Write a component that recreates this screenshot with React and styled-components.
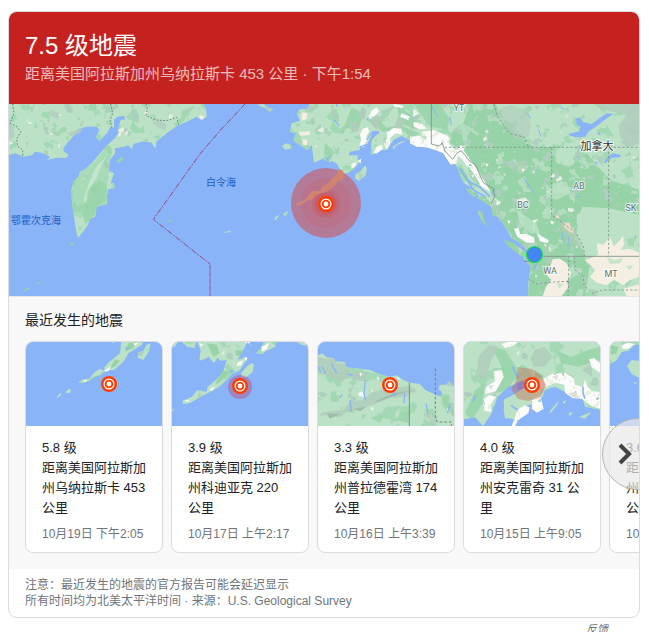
import styled, { createGlobalStyle } from 'styled-components'

const quakes = [
  {
    magnitude: '5.8 级',
    place: '距离美国阿拉斯加州乌纳拉斯卡 453 公里',
    time: '10月19日 下午2:05',
    map: 'aleutians',
  },
  {
    magnitude: '3.9 级',
    place: '距离美国阿拉斯加州科迪亚克 220 公里',
    time: '10月17日 上午2:17',
    map: 'kodiak',
  },
  {
    magnitude: '3.3 级',
    place: '距离美国阿拉斯加州普拉德霍湾 174 公里',
    time: '10月16日 上午3:39',
    map: 'prudhoe',
  },
  {
    magnitude: '4.0 级',
    place: '距离美国阿拉斯加州安克雷奇 31 公里',
    time: '10月15日 上午9:05',
    map: 'anchorage',
  },
  {
    magnitude: '3.6 级',
    place: '距离美国阿拉斯加州科迪亚克 196 公里',
    time: '10月14日 上午7:12',
    map: 'coast',
  },
]

const color = {
  water: '#8ab4f8',
  land: '#bbe2c6',
  forest: '#96d3a7',
  rock: '#b0cdbc',
  sand: '#f4efe2',
  snow: '#fbfbfb',
}

// Terrain blotches: every channel of the noise is cut into one kind of patch
const TerrainFilter = ({ id, freq, seed, green, rock, sand, tone }) => (
  <filter id={id} x="0" y="0" width="1" height="1" colorInterpolationFilters="sRGB">
    <feTurbulence type="fractalNoise" baseFrequency={freq} numOctaves="3" seed={seed} result="noise" />
    <feColorMatrix
      in="noise"
      values={`0 0 0 0 ${tone[0]}  0 0 0 0 ${tone[1]}  0 0 0 0 ${tone[2]}  20 0 0 0 ${green * -20}`}
      result="green"
    />
    <feColorMatrix
      in="noise"
      values={`0 0 0 0 .68  0 0 0 0 .81  0 0 0 0 .74  0 20 0 0 ${rock * -20}`}
      result="rock"
    />
    <feColorMatrix
      in="noise"
      values={`0 0 0 0 .9  0 0 0 0 .94  0 0 0 0 .88  0 0 20 0 ${sand * -20}`}
      result="sand"
    />
    <feMerge result="patches">
      <feMergeNode in="green" />
      <feMergeNode in="rock" />
      <feMergeNode in="sand" />
    </feMerge>
    <feComposite in="patches" in2="SourceAlpha" operator="in" result="cut" />
    <feMerge>
      <feMergeNode in="SourceGraphic" />
      <feMergeNode in="cut" />
    </feMerge>
  </filter>
)

const Epicenter = ({ x, y }) => (
  <g transform={`translate(${x} ${y})`}>
    <circle r="8" fill="#ff3d00" />
    <circle r="4.9" fill="none" stroke="#fff" strokeWidth="1.2" />
    <circle r="2.4" fill="#fff" />
  </g>
)

const MainMap = () => (
  <MapSvg viewBox="0 0 630 192" preserveAspectRatio="xMidYMid slice" $height={192} role="img" aria-label="地震位置地图">
    <defs>
      <TerrainFilter id="tundra" freq=".026" seed="7" green={0.6} rock={0.67} sand={0.76} tone={[0.63, 0.85, 0.7]} />
      <TerrainFilter id="woods" freq=".028" seed="12" green={0.6} rock={0.64} sand={0.73} tone={[0.7, 0.87, 0.75]} />
      <TerrainFilter id="plain" freq=".018" seed="5" green={0.6} rock={0.7} sand={0.8} tone={[0.64, 0.85, 0.71]} />
      <TerrainFilter id="ice" freq=".05" seed="3" green={0.78} rock={0.74} sand={0.6} tone={[0.6, 0.83, 0.67]} />
    </defs>
    <g transform="scale(.333333)">
      <g transform="translate(-27 -12)">
        <g filter="url(#tundra)" fill={color.land}>
          <path d="M27 12V165L45 160 70 170 97 165 105 155 125 158 150 170 142 180 172 173 200 173 206 165 192 155 190 145 205 125 228 100 235 86 262 80 290 80 298 90 288 112 298 122 322 98 330 82 342 84 342 60 352 50 372 48 376 58 362 60 356 80 354 100 345 115 325 132 300 160 275 190 255 208 240 215 235 230 220 245 214 270 216 310 222 350 230 400 234 414 262 378 270 356 286 350 290 320 322 312 320 290 325 268 344 265 342 250 332 250 342 220 326 212 330 180 345 160 345 145 372 140 385 136 396 148 400 132 430 124 455 128 466 146 470 124 500 100 530 78 560 65 590 50 605 60 620 50 618 25 610 12Z" />
        </g>
        <path
          d="M325 135 275 195 240 218 218 255 216 300 222 345 245 355 258 340 275 345 285 340 288 320 320 310 318 270 328 215 322 205 335 160Z"
          fill={color.forest}
          opacity=".5"
        />
        <path d="M270 262 300 240 322 262 318 300 290 318 284 346 256 372 246 340 262 300Z" fill={color.forest} opacity=".8" />
        <path
          d="M322 165 305 195 290 235 262 275 258 310 250 300 266 250 288 200Z"
          fill="#cdebd5"
          opacity=".7"
        />
        <path
          d="M200 100 230 90 250 80 240 100 214 108ZM455 68 480 60 500 74 496 90 476 84ZM150 30 180 40 172 56 148 46ZM27 70 40 80 44 110 27 120Z"
          fill={color.rock}
          opacity=".8"
        />
        <g fill={color.forest}>
          <path d="M350 186 356 176 369 171 367 182 354 188ZM208 438 212 430 222 426 218 434ZM68 577 74 569 90 562 88 567 74 574ZM50 585 56 581 60 583ZM108 553 118 545 123 546 114 553ZM389 296 394 300 402 308 396 304ZM502 361 514 362 512 366 504 364Z" />
        </g>
        <g fill={color.sand}>
          <path d="M356 98 364 95 362 106 354 112ZM376 96 384 92 382 104 376 104ZM598 46 612 48 610 58 600 58ZM150 100 158 98 157 104 151 105ZM434 35 444 32 440 42 434 42Z" />
        </g>
        <g fill="none" stroke="#6b7f76" strokeWidth="3" strokeDasharray="5 5">
          <path d="M38 12 42 40 30 70 48 78 62 95 50 118 52 138 68 150V166M332 12 338 40 330 60 336 84M438 12 442 28 438 46 468 60 500 62 530 52 536 74" />
        </g>
      </g>

      <g transform="translate(573 -12)">
        <g fill={color.land} filter="url(#tundra)">
          <path d="M330 12 320 28 300 28 290 40 300 62 275 70 270 95 288 100 280 122 322 150 335 135 342 188 368 176 390 190 392 182 410 190 418 205 430 222 445 218 462 206 482 182 472 178 474 166 446 166 450 155 480 150 478 140 500 138 520 92 540 94 515 120 512 165 545 150 562 150 580 120 604 108 640 125 660 140 700 145 725 155 748 185 768 195 780 225 792 250 820 266 845 300 875 320 878 345 895 350 918 385 935 415 970 435 975 455 968 470 978 482 992 500 985 545V588H1319V12ZM246 138 258 130 275 136 272 146 256 149ZM466 222 480 215 496 196 500 206 498 225 478 242 466 236ZM170 14 190 12 206 24 220 28 210 36 195 24ZM222 358 230 348 238 346 228 360ZM250 342 258 335 264 334 260 346 252 347ZM72 396 92 392 92 396 76 398ZM578 140 602 125 622 120 590 136 580 148Z" />
        </g>
        <path
          d="M455 22 490 40 475 90 440 84 420 110 440 60ZM590 12 640 50 652 90 600 70ZM375 130 400 150 396 172 372 160ZM500 60 530 50 560 84 600 76 660 100 640 110 590 84 550 96ZM640 12 720 12 750 60 740 88 690 80Z"
          fill={color.forest}
          opacity=".8"
        />
        <path
          d="M485 20 500 30 492 60 476 50ZM520 44 545 50 530 90 512 70ZM595 50 612 60 605 90 580 84ZM450 68 470 66 476 92 456 98ZM330 60 342 52 346 70 336 76Z"
          fill={color.rock}
        />
        <g fill={color.sand}>
          <path d="M306 38 322 38 320 58 304 62ZM297 96 330 94 328 105 300 107ZM308 118 322 120 320 136 308 134ZM345 136 352 138 348 144Z" />
        </g>
        <g fill={color.snow} filter="url(#ice)">
          <path d="M514 32 530 22 538 34 522 50 508 50ZM488 86 502 82 508 94 498 110 502 122 490 142 478 140 484 118 480 104ZM560 98 580 84 604 86 606 104 588 100 572 112 570 130 560 146 552 132 562 112ZM530 140 546 134 548 146 532 160 520 160ZM455 192 470 186 464 200 454 206ZM474 182 484 176 482 190ZM605 40 630 50 625 60 600 50ZM580 12 612 18 606 24 584 20Z" />
          <path d="M630 110 660 108 680 122 676 96 700 90 740 106 748 114 745 128 765 150 784 146 800 158 822 190 840 222 866 226 870 246 890 262 890 276 878 280 848 262 820 240 808 210 788 180 774 166 770 190 752 194 730 160 705 150 680 142 650 140 630 130ZM640 66 666 72 680 86 660 88 642 80ZM640 26 656 40 640 50ZM666 100 674 92 680 100Z" />
        </g>
        <g fill="none" stroke={color.water} strokeWidth="4">
          <path d="M500 120 516 96 536 100M480 140 508 132M408 12 412 20M388 190 380 176 392 170M402 60 418 78M500 60 506 54M478 172 498 152" />
        </g>
      </g>

      <g transform="translate(1203 -12)">
        <g fill={color.forest} filter="url(#woods)">
          <path d="M180 12 255 12 280 50 340 110 370 140 430 142 440 190 480 200 530 160 600 240 689 270V345L520 320 500 345 500 400 525 468 540 490 525 588H355L362 500 345 475 345 440 310 415 265 350 250 290 210 220 160 150 120 130 130 90 160 70Z" />
          <path d="M282 420 310 428 350 460 358 478 330 466 296 440ZM202 332 222 330 218 350 234 382 214 364Z" />
          <path d="M142 202 160 208 178 240 198 262 190 268 168 236 148 220ZM172 196 190 220 210 252 202 258 180 230ZM168 268 190 264 200 290 186 288ZM196 292 220 288 240 305 240 320 218 304ZM246 310 258 322 260 350 248 346Z" />
        </g>
        <path d="M560 12H689V130L660 142 630 110 626 76 650 46 610 36 570 26Z" fill={color.rock} opacity=".85" />
        <path
          d="M262 30 300 14 350 30 362 70 356 110 322 120 290 90 270 60ZM318 185 350 180 352 212 326 220ZM238 312 256 340 270 366 280 350 256 300ZM330 440 350 420 372 430 350 445ZM400 430 430 480 410 500 395 460ZM440 360 480 370 520 430 520 460 490 430 460 400Z"
          fill={color.rock}
          opacity=".6"
        />
        <path d="M516 320 600 325 689 346V408L640 420 600 410 560 468 525 468 500 400Z" fill={color.land} />
        <path d="M320 330 350 350 380 372 390 400 362 400 330 372ZM430 250 470 245 480 280 440 300 405 288Z" fill={color.land} opacity=".8" />
        <g fill={color.sand}>
          <path d="M560 430 580 434 600 412 612 440 640 408 642 436 630 450 660 446 689 458V530L660 540 640 556 612 540 590 556 560 548 540 530 556 510 525 480 565 465Z" />
          <path d="M640 566 689 552V588H650ZM428 478 450 476 470 490 484 520 470 545 476 560 455 588H398L408 560 424 540 404 520 420 500Z" />
        </g>
        <path d="M590 470 612 480 640 474 630 490 600 492ZM646 500 670 496 660 510ZM440 548 460 552 448 566Z" fill={color.land} opacity=".8" />
        <g fill={color.snow}>
          <path d="M312 386 326 384 330 402 348 402 372 412 374 428 350 428 322 410ZM256 308 268 306 264 318ZM292 360 302 364 296 372ZM150 136 165 140 160 152 144 148ZM226 190 236 192 230 202ZM334 206 345 208 340 216ZM420 362 434 366 426 374ZM380 398 400 412 416 420 414 430 390 424Z" />
        </g>
        <g fill="#e9dccb">
          <path d="M436 346 446 346 448 356 438 356ZM460 368 478 368 484 384 500 402 480 396 464 384ZM280 220 288 222 284 230Z" />
        </g>
        <g fill={color.water}>
          <path d="M475 102 508 94 510 80 500 74 498 56 508 52 518 66 545 72 572 52 590 40 612 42 600 48 576 66 552 84 536 94 526 110 500 112 482 108ZM580 188 596 168 610 160 634 166 630 172 604 174 588 188ZM448 14 458 24 466 28 456 28ZM555 186 562 186 560 196ZM562 98 568 96 572 103 564 104ZM490 286 512 290 510 293ZM674 404 680 410 676 418Z" />
        </g>
        <g fill="none" stroke={color.water} strokeWidth="3">
          <path d="M340 232 352 250 372 282M386 88 392 110M352 40 362 56M120 50 124 76M66 20 84 50M500 168 514 182M254 264 244 284M456 396 460 420M476 410 474 440" />
          <path d="M150 205 190 270 228 292M170 240 210 262 240 290M205 330 250 350M338 440 356 462 380 490 372 508" strokeWidth="5" />
        </g>
        <g fill="none" stroke="#7f8f88" strokeWidth="2.5">
          <path d="M64 12V132L86 138 98 130 104 152 128 178 142 158 154 152 180 184 196 194 220 248 250 266 254 290 244 310M400 469H689M342 484 360 484" />
          <g strokeDasharray="7 6">
            <path d="M104 142H689M425 142V346L460 370 500 402 520 440 524 468M596 142V468M252 12 262 50 300 100 344 112 356 142M355 538 380 552 430 546 476 544V470M492 470 496 510 520 530 522 556 548 580 578 570H689M476 544 474 588" />
          </g>
        </g>
      </g>

      <path d="M708 0 633 80 573 150 433 346 603 480" fill="none" stroke="#8f4a78" strokeWidth="3" strokeDasharray="18 4 5 4" />
      <path d="M603 482V576" fill="none" stroke="#9580bd" strokeWidth="5" opacity=".7" />
      <path d="M603 482V576" fill="none" stroke="#8f4a78" strokeWidth="2" strokeDasharray="15 6" opacity=".7" />
    </g>

    <g fill="#de4238">
      <circle cx="317" cy="99" r="35" opacity=".5" />
      <circle cx="317" cy="99" r="25" opacity=".12" />
      <circle cx="317" cy="100" r="14" opacity=".2" />
      <circle cx="317" cy="100" r="11" opacity=".3" />
    </g>
    <path
      d="M412 208 426 210 434 222 430 238 414 244 400 260 384 274 362 280 346 286 338 298 320 302 308 312 290 318 290 308 310 302 322 292 334 276 348 272 362 274 366 260 384 250 400 232 412 222Z"
      transform="scale(.333333) translate(573 -12)"
      fill="#d0846f"
    />
    <Epicenter x={317} y={100} />
    <circle cx="525.5" cy="150.5" r="8" fill="#4285f4" stroke="#12e03a" strokeWidth="1.2" />

    <SeaLabel x="212" y="82">白令海</SeaLabel>
    <SeaLabel x="27" y="120">鄂霍次克海</SeaLabel>
    <CountryLabel x="588" y="46">加拿大</CountryLabel>
    <RegionLabel x="450" y="7">YT</RegionLabel>
    <RegionLabel x="514" y="104">BC</RegionLabel>
    <RegionLabel x="570" y="85">AB</RegionLabel>
    <RegionLabel x="622" y="107">SK</RegionLabel>
    <RegionLabel x="541" y="170">WA</RegionLabel>
    <RegionLabel x="602" y="173">MT</RegionLabel>
  </MapSvg>
)

const miniMaps = {
  aleutians: (
    <>
      <g transform="scale(.333333) translate(-78 -126)">
        <g filter="url(#plain)" fill={color.land}>
          <path d="M364 126 360 160 345 172 325 188 312 204 318 210 342 210 372 184 385 160 404 148 426 134 428 126ZM236 246 250 238 268 236 280 220 300 206 314 214 302 224 284 230 268 242 242 250ZM414 158 430 152 440 134 452 130 446 156 430 180 414 174ZM170 292 178 282 186 280 176 292ZM197 276 206 268 213 268 211 278 200 280ZM334 126 342 126 340 130Z" />
        </g>
        <path d="M385 130 410 126 400 145 372 156 380 145ZM345 178 360 182 345 200 330 205Z" fill={color.forest} />
        <path d="M312 210 322 206 334 196 326 212 316 216ZM245 244 262 238 258 246ZM400 130 416 128 404 138Z" fill={color.snow} />
        <path d="M374 140 388 144 380 150Z" fill={color.water} />
      </g>
      <Epicenter x={83} y={42} />
    </>
  ),
  kodiak: (
    <>
      <g transform="scale(.333333) translate(-36 -36)">
        <g filter="url(#plain)" fill={color.land}>
          <path d="M112 36 122 60 118 92 134 88 146 80 162 100 172 84 182 92 200 90 188 130 160 156 142 172 140 186 112 180 96 200 68 212 68 222 92 218 112 206 130 196 146 188 176 172 202 148 212 134 240 120 262 86 250 78 266 64 275 48 266 36ZM36 36H54L44 50 36 52ZM66 36H108L104 54 82 50ZM288 70 306 52 310 36H350L346 50 320 62 306 72ZM410 36H444V48L424 44ZM244 128 262 108 276 98 282 104 278 126 258 142 244 140ZM36 236 42 238 38 246Z" />
        </g>
        <path d="M140 40 170 44 178 70 160 80ZM190 120 206 130 180 156 165 164ZM225 62 250 60 245 80 228 76ZM334 36H348V48Z" fill={color.forest} />
        <path d="M256 36H270L264 48ZM232 98 250 90 244 106 230 108ZM252 86 262 80 260 92ZM304 50 328 38 322 56 306 66ZM146 180 164 168 158 182ZM74 210 90 210 82 216ZM118 38 130 44 122 50ZM428 36H442V44Z" fill={color.snow} />
        <path d="M262 36 276 50 250 84 232 90 248 64ZM206 128 216 118 220 126Z" fill={color.water} />
      </g>
      <circle cx="68" cy="45" r="12" fill="#c23b60" opacity=".38" />
      <Epicenter x={68} y={44} />
    </>
  ),
  prudhoe: (
    <>
      <g transform="scale(.333333) translate(-24 -36)">
        <g filter="url(#plain)" fill={color.land}>
          <path d="M24 76 36 70 50 82 70 84 76 94 104 96 108 112 150 116 180 120 212 134 240 140 260 136 280 150 300 158 330 162 346 180 376 194 394 200 396 186 386 178 390 164 410 164 416 154 432 168V288H24Z" />
        </g>
        <g fill={color.rock} opacity=".85">
          <path d="M24 80 50 86 70 84 80 98 104 100 118 124 110 148 80 152 50 136 24 132ZM130 126 160 122 172 134 160 154 140 152Z" />
          <path d="M180 190 230 174 300 168 318 180 290 200 240 204 200 220 150 238 110 246 90 262 40 256 24 260 40 246 100 240 120 214 160 210Z" />
        </g>
        <path d="M200 212 250 190 300 182 250 198 190 220ZM50 250 90 252 60 266ZM130 236 170 230 150 244Z" fill="#9dbcab" />
        <path d="M396 204 420 194 416 220 432 240V262L410 240ZM60 200 84 196 88 214 66 216ZM270 250 300 244 296 280 260 270ZM340 240 370 236 372 256ZM180 262 220 258 210 280Z" fill={color.forest} opacity=".7" />
        <path d="M144 190 158 184 162 200 148 198ZM148 130 156 128 152 140ZM200 138 208 144 204 150ZM410 234 418 240 412 246ZM262 140 270 146 264 150Z" fill={color.snow} />
        <path d="M166 150 162 190 166 210M120 210 124 244M36 110 46 130M64 100 80 130M96 194 88 204M284 190 282 220M252 180 256 200M112 132 128 136M348 220 354 250M24 110 32 126M420 220 412 250" fill="none" stroke={color.water} strokeWidth="4" />
        <path d="M298 158V288" fill="none" stroke="#7f918a" strokeWidth="3" />
        <path d="M376 116V262L382 276H424V288" fill="none" stroke="#6f817c" strokeWidth="3" strokeDasharray="8 6" />
      </g>
      <Epicenter x={72} y={43} />
    </>
  ),
  anchorage: (
    <>
      <g transform="scale(.333333) translate(-27 -36)">
        <g filter="url(#plain)" fill={color.land}>
          <path d="M27 36H435V288H27Z" />
        </g>
        <path d="M110 50 150 60 190 120 160 180 120 190 140 110ZM240 120 270 140 240 150ZM300 60 350 80 400 60 435 50V90L370 110 320 100ZM60 180 90 160 84 220 50 270 30 250Z" fill={color.forest} opacity=".85" />
        <path d="M240 60 270 50 292 80 270 110 236 110 226 84ZM70 80 100 46 130 50 108 94 90 150 64 140ZM380 120 410 100 412 140Z" fill={color.rock} opacity=".85" />
        <path d="M27 268 60 262 84 288H27ZM84 288 110 250 128 200 160 170 204 154 222 162 190 186 150 208 146 240 150 262 176 268 200 232 240 220 262 200 270 180 300 170 330 186 356 200 384 208 390 230 435 240V288Z" fill={color.water} />
        <g fill={color.land}>
          <path d="M146 210 190 186 225 190 262 192 250 214 214 226 190 262 150 266ZM280 250 294 232 312 212 306 226 290 246ZM322 216 334 210 328 222ZM340 250 356 246 344 258ZM372 260 410 246 390 266Z" />
        </g>
        <g fill={color.snow} filter="url(#ice)">
          <path d="M116 124 140 120 146 140 136 160 122 184 90 192 94 170 120 154ZM84 208 102 196 124 200 108 222 110 246 88 242ZM264 148 290 132 330 128 356 144 360 164 384 172 390 148 396 168 410 184 435 186V236L408 228 380 206 352 204 330 188 328 164 300 158 270 172ZM188 240 206 226 224 232 220 250 190 270 180 288H170ZM232 208 256 198 266 236 246 248 230 236ZM402 88 418 84 435 100V128L410 112ZM138 42 160 36H192L172 48 150 54Z" />
        </g>
        <path d="M290 140 310 136 306 150ZM340 190 360 186 372 204 352 200ZM100 168 116 164 108 180Z" fill="#dcdedd" />
        <path d="M384 170V190L390 206M172 110 190 144M62 196 54 216M284 178 268 204M168 226 188 240" fill="none" stroke={color.water} strokeWidth="5" />
      </g>
      <path d="m54 25 14 2 10 7 4 9-6 13-12 3-10-2-7-10 5-8Z" fill="#c75a45" opacity=".38" />
      <path d="M52 41 60 37 62 46 54 48Z" fill="#7a62c8" opacity=".4" />
      <path d="M76 36 82 43 74 52Z" fill="#ff9a92" opacity=".5" />
      <Epicenter x={68} y={43} />
    </>
  ),
  coast: (
    <g transform="scale(.333333) translate(-465 -36)">
      <g filter="url(#plain)" fill={color.land}>
        <path d="M465 36H600L540 44 520 62 500 66 486 90 465 102ZM516 108 530 90 552 92 600 110V150L548 142 530 132ZM534 156 546 158 540 162Z" />
      </g>
      <path d="M500 46 520 38 540 42 518 56 502 56Z" fill={color.snow} />
      <path d="M468 46 490 52 484 70 468 74Z" fill={color.forest} />
    </g>
  ),
}

const QuakeCard = ({ quake }) => (
  <Card>
    <MapSvg viewBox="0 0 136 84" preserveAspectRatio="xMidYMid slice" $height={84} aria-hidden="true">
      {miniMaps[quake.map]}
    </MapSvg>
    <CardBody>
      <Magnitude>{quake.magnitude}</Magnitude>
      <Place>{quake.place}</Place>
      <Time>{quake.time}</Time>
    </CardBody>
  </Card>
)

const App = () => (
  <Page>
    <GlobalStyle />
    <Panel>
      <Alert>
        <Title>7.5 级地震</Title>
        <Subtitle>距离美国阿拉斯加州乌纳拉斯卡 453 公里 · 下午1:54</Subtitle>
      </Alert>
      <MainMap />
      <Recent>
        <Heading>最近发生的地震</Heading>
        <Carousel>
          <Track>
            {quakes.map((quake) => (
              <QuakeCard key={quake.time} quake={quake} />
            ))}
          </Track>
          <NextButton type="button" aria-label="下一个">
            <svg width="14" height="22" viewBox="0 0 14 22" aria-hidden="true">
              <path d="m2 2 9 9-9 9" fill="none" stroke="#444" strokeWidth="4" />
            </svg>
          </NextButton>
        </Carousel>
      </Recent>
      <Note>
        <p>注意：最近发生的地震的官方报告可能会延迟显示</p>
        <p>所有时间均为北美太平洋时间 · 来源：U.S. Geological Survey</p>
      </Note>
    </Panel>
    <Feedback>
      <a href="#feedback">反馈</a>
    </Feedback>
  </Page>
)

export default App

const GlobalStyle = createGlobalStyle`
  * {
    box-sizing: border-box;
  }

  html {
    scrollbar-width: none;
  }

  body {
    margin: 0;
    background: #fff;
    color: #202124;
    font-family: 'Liberation Sans', Arial, 'Noto Sans CJK SC', sans-serif;
  }

  h1, h2, h3, p, ul {
    margin: 0;
    padding: 0;
    font-weight: 400;
  }
`

const Page = styled.main`
  padding: 11px 9px 0 8px;
`

const Panel = styled.section`
  overflow: hidden;
  border: 1px solid #dadce0;
  border-radius: 9px;
`

const Alert = styled.header`
  padding: 18px 16px;
  background: #c5221f;
`

const Title = styled.h1`
  color: #fff;
  font-size: 24px;
  line-height: 32px;
`

const Subtitle = styled.p`
  color: rgba(255, 255, 255, 0.7);
  font-size: 15px;
  line-height: 24px;
`

const MapSvg = styled.svg`
  display: block;
  width: 100%;
  height: ${(props) => props.$height}px;
  background: #8ab4f8;
`

const SeaLabel = styled.text`
  fill: #1f5fc4;
  font-family: 'Noto Sans CJK SC', sans-serif;
  font-size: 10px;
  text-anchor: middle;
`

const CountryLabel = styled.text`
  fill: #2b2f33;
  stroke: #fff;
  stroke-width: 2px;
  stroke-opacity: 0.8;
  paint-order: stroke;
  font-family: 'Noto Sans CJK SC', sans-serif;
  font-size: 11px;
  text-anchor: middle;
`

const RegionLabel = styled.text`
  fill: #5f7370;
  stroke: #fff;
  stroke-width: 2px;
  stroke-opacity: 0.7;
  paint-order: stroke;
  font-family: Roboto, sans-serif;
  font-size: 9px;
  text-anchor: middle;
`

const Recent = styled.div`
  padding: 13px 0 16px 16px;
  border-top: 1px solid #e4e5e7;
  background: #f8f8f8;
`

const Heading = styled.h2`
  margin-bottom: 11px;
  font-size: 14px;
  line-height: 20px;
`

const Carousel = styled.div`
  position: relative;
`

const Track = styled.ul`
  display: flex;
  gap: 8px;
  overflow: hidden;
  list-style: none;
`

const Card = styled.li`
  flex: 0 0 138px;
  overflow: hidden;
  border: 1px solid #dadce0;
  border-radius: 8px;
  background: #fff;
`

const CardBody = styled.div`
  padding: 12px 14px 10px 16px;
`

const Magnitude = styled.h3`
  font-size: 13px;
  line-height: 20px;
`

const Place = styled.p`
  min-height: 60px;
  font-size: 13px;
  line-height: 20px;
`

const Time = styled.p`
  margin-top: 8px;
  color: #70757a;
  font-size: 12px;
  line-height: 16px;
  white-space: nowrap;
`

// Sits over the last card, half of it cut by the panel edge
const NextButton = styled.button`
  position: absolute;
  top: 77px;
  right: -35px;
  display: flex;
  align-items: center;
  width: 72px;
  height: 72px;
  padding: 0 0 0 15px;
  border: 1px solid #b4b4b4;
  border-radius: 50%;
  background: rgba(232, 232, 232, 0.7);
  cursor: pointer;
`

const Note = styled.footer`
  padding: 8px 16px;
  color: #70757a;
  font-size: 12px;
  line-height: 16px;
`

const Feedback = styled.div`
  padding: 3px 32px 0 0;
  font-size: 11px;
  line-height: 16px;
  text-align: right;

  a {
    color: #70757a;
    font-style: italic;
    text-decoration: none;
  }
`
